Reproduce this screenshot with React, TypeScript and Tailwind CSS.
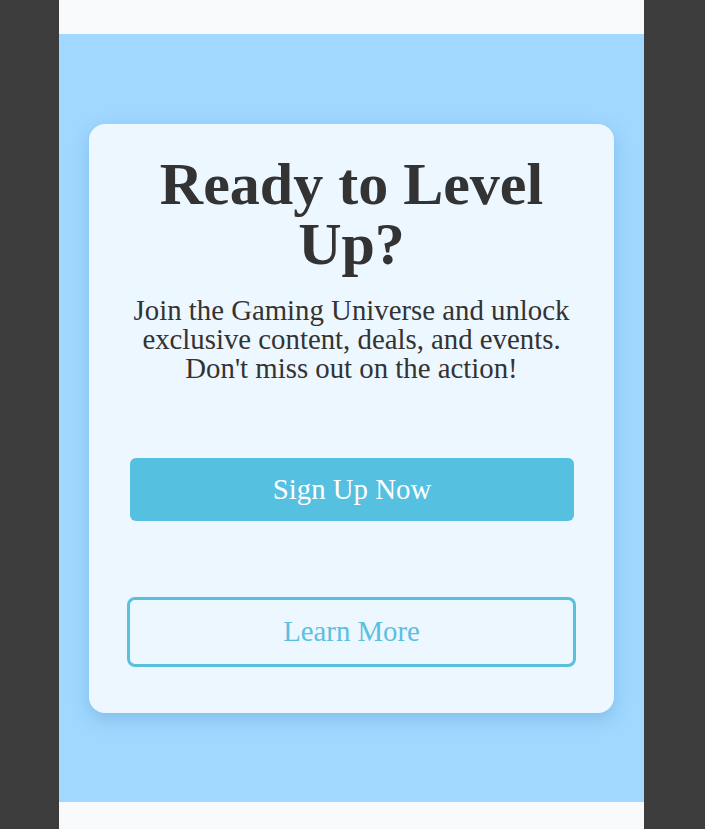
const App = () => {
  return (
    <div className="min-h-[829px] bg-[#3c3c3c] font-['Liberation_Serif',serif] text-[#333333]">
      <div className="ml-[59px] w-[585px] min-h-[829px] bg-[#f8f9fa] pt-[34px]">
        {/* CTA section */}
        <section className="bg-[#a0d8ff] px-[30px] pt-[90px] pb-[89px]">
          <div className="rounded-2xl bg-[#edf7ff] px-[38px] pt-[30px] pb-[46px] text-center shadow-[0_6px_18px_rgba(40,110,170,0.25)]">
            <h1 className="text-[60px] font-bold leading-[60px]">Ready to Level Up?</h1>
            <p className="mt-[22px] text-[28.8px] leading-[29px]">
              Join the Gaming Universe and unlock exclusive content, deals, and events. Don't miss out on the action!
            </p>
            <button className="mx-[3px] mt-[75px] h-[63px] w-[444px] rounded-md bg-[#56c0e0] text-[28.8px] text-white">
              Sign Up Now
            </button>
            <button className="mt-[76px] h-[70px] w-full rounded-lg border-[3px] border-[#5bc0de] text-[28.8px] text-[#5bc0de]">
              Learn More
            </button>
          </div>
        </section>
      </div>
    </div>
  )
}

export default App
